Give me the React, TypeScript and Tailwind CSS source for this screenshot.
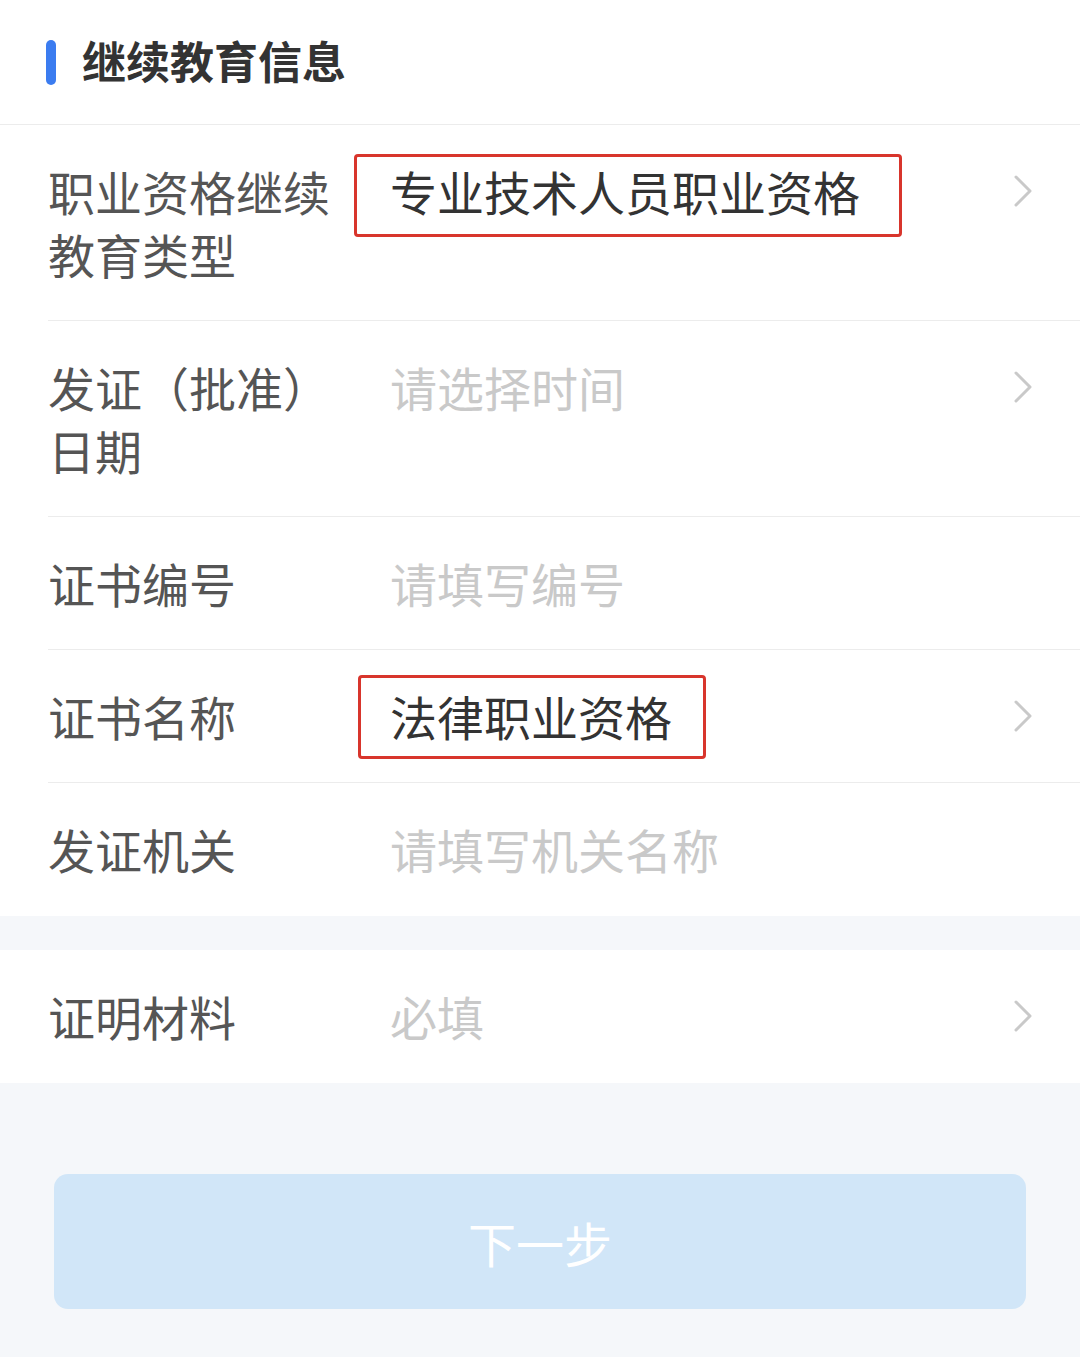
import React from "react";

const font = { fontFamily: '"Noto Sans CJK SC", "Noto Sans", sans-serif' };

function Chevron() {
  return (
    <div className="flex h-[63px] w-[20px] shrink-0 items-center justify-end">
      <svg width="18" height="32" viewBox="0 0 18 32" fill="none">
        <polyline points="2,2 16,16 2,30" stroke="#c9c9c9" strokeWidth="3" strokeLinecap="round" strokeLinejoin="round" />
      </svg>
    </div>
  );
}

type RowProps = {
  label: string;
  value: string;
  filled?: boolean;
  arrow?: boolean;
  divider?: boolean;
  box?: string;
};

function Row({ label, value, filled, arrow, divider = true, box }: RowProps) {
  return (
    <div
      className={`ml-[48px] flex items-start pr-[48px] pt-[34px] ${
        divider ? "pb-[35px] border-b border-[#ececec]" : "pb-[36px]"
      }`}
    >
      <div className="w-[342px] shrink-0 pr-[52px] text-[47px] leading-[63px] text-[#555555]">{label}</div>
      <div className="flex-1">
        <span className={`relative inline-block text-[47px] leading-[63px] ${filled ? "text-[#333333]" : "text-[#c9c9c9]"}`}>
          {value}
          {box && <span className={`pointer-events-none absolute rounded-[4px] border-[3px] border-[#d8352c] ${box}`} />}
        </span>
      </div>
      {arrow && <Chevron />}
    </div>
  );
}

export default function App() {
  return (
    <div className="min-h-[1357px] w-[1080px] bg-[#f5f7fa]" style={font}>
      <div className="bg-white">
        <div className="flex h-[125px] items-center border-b border-[#ececec] pl-[46px]">
          <div className="h-[45px] w-[10px] rounded-full bg-[#3b7cf0]" />
          <div className="ml-[26px] -mt-[4px] text-[44px] font-bold text-[#333333]">继续教育信息</div>
        </div>
        <Row label="职业资格继续教育类型" value="专业技术人员职业资格" filled arrow box="-left-[36px] -right-[42px] -top-[5px] -bottom-[15px]" />
        <Row label="发证（批准）日期" value="请选择时间" arrow />
        <Row label="证书编号" value="请填写编号" />
        <Row label="证书名称" value="法律职业资格" filled arrow box="-left-[32px] -right-[34px] -top-[9px] -bottom-[12px]" />
        <Row label="发证机关" value="请填写机关名称" divider={false} />
      </div>
      <div className="mt-[34px] bg-white">
        <Row label="证明材料" value="必填" arrow divider={false} />
      </div>
      <div className="px-[54px] pt-[91px] pb-[49px]">
        <button className="flex h-[135px] w-full items-center justify-center rounded-[14px] bg-[#d1e6f8] text-[48px] text-white">
          下一步
        </button>
      </div>
    </div>
  );
}
